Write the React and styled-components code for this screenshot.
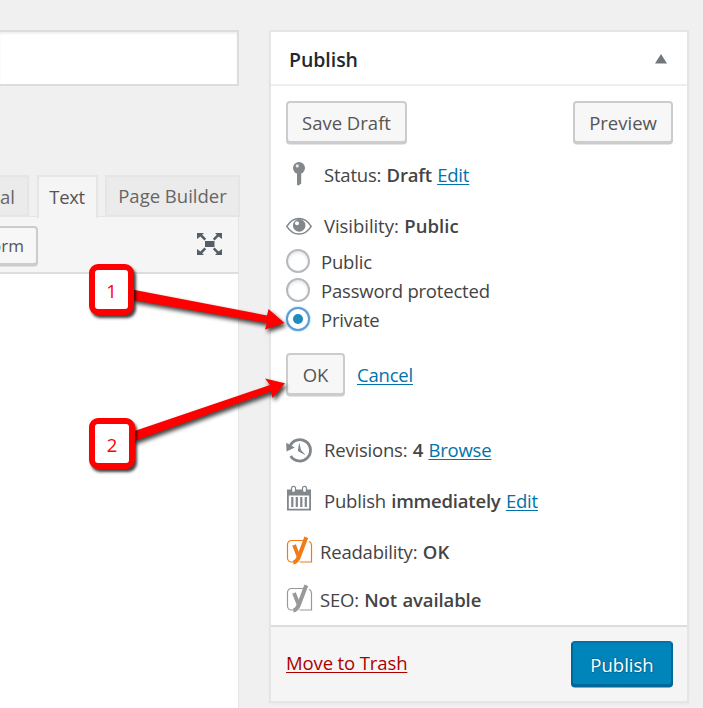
import styled, { createGlobalStyle, css } from 'styled-components';

const GlobalStyle = createGlobalStyle`
  * {
    box-sizing: border-box;
  }

  body {
    margin: 0;
    background: #f0f0f0;
    color: #444;
    font-family: 'Open Sans', 'Noto Sans', sans-serif;
    font-size: 18.5px;
    letter-spacing: -0.2px;
  }
`;

const Page = styled.div`
  position: relative;
  display: flex;
  justify-content: space-between;
  width: 703px;
  height: 708px;
  padding: 30px 14px 0 0;
  overflow: hidden;
`;

/* Editor column */

const Editor = styled.main`
  display: flex;
  flex-direction: column;
  width: 240px;
`;

const TitleField = styled.div`
  width: 239px;
  height: 56px;
  background: #fff;
  border: 2px solid #ddd;
  border-left: 0;
  box-shadow: inset 0 2px 2px rgba(0, 0, 0, 0.06);
`;

const Tabs = styled.div`
  display: flex;
  justify-content: space-between;
  height: 42px;
  margin-top: 89px;
`;

const Tab = styled.div`
  display: flex;
  align-items: center;
  justify-content: ${(props) => (props.$cut ? 'flex-end' : 'center')};
  width: ${(props) => props.$width}px;
  height: 42px;
  padding: ${(props) => (props.$cut ? '0 12px 0 0' : '0 0 1px')};
  border: 2px solid #e5e5e5;
  border-left-width: ${(props) => (props.$cut ? 0 : 2)}px;
  background: #ebebeb;
  color: #666;
  white-space: nowrap;
  letter-spacing: ${(props) => props.$spacing || 0}px;

  ${(props) =>
    props.$active &&
    css`
      z-index: 1;
      height: 43px;
      padding-bottom: 3px;
      border-bottom: 0;
      background: #f5f5f5;
      color: #555;
    `}
`;

const Toolbar = styled.div`
  display: flex;
  align-items: flex-start;
  justify-content: space-between;
  width: 239px;
  height: 58px;
  margin-top: -1px;
  padding: 9px 15px 0 0;
  background: #f5f5f5;
  border: 1px solid #e5e5e5;
  border-width: 1px 1px 2px 0;
  border-bottom-color: #ddd;
`;

const TextArea = styled.div`
  flex: 1;
  width: 239px;
  background: #fff;
  border-right: 1px solid #e5e5e5;
`;

/* Shared controls */

const Button = styled.button`
  display: flex;
  align-items: center;
  justify-content: center;
  width: ${(props) => props.$width}px;
  height: 42px;
  padding: 1px 0 0;
  border: 2px solid #ccc;
  border-radius: 4px;
  background: #f7f7f7;
  box-shadow: 0 1.5px 0 #ccc;
  color: #555;
  font: inherit;
  letter-spacing: ${(props) => props.$spacing || 0}px;
  white-space: nowrap;
`;

const ToolbarButton = styled(Button)`
  justify-content: flex-end;
  height: 39px;
  padding: 0 12px 0 0;
  border-left: 0;
  border-radius: 0 4px 4px 0;
  font-size: 17px;
`;

const PrimaryButton = styled(Button)`
  height: 45px;
  padding-top: 2px;
  border-color: #0073aa #006799 #006799;
  background: #0085ba;
  box-shadow: 0 1.5px 0 #006799;
  color: #fff;
  text-shadow: 0 -1px 1px #006799, 1px 0 1px #006799, 0 1px 1px #006799;
`;

const Link = styled.a`
  color: #0073aa;
  text-decoration: underline;
  text-decoration-thickness: 1px;
  text-underline-offset: 2px;
`;

const TrashLink = styled(Link)`
  padding-bottom: 2px;
  color: #a00;
  letter-spacing: -0.12px;
`;

/* Publish box */

const Box = styled.aside`
  display: flex;
  flex-direction: column;
  width: 420px;
  height: 673px;
  background: #fff;
  border: 2px solid #e5e5e5;
  box-shadow: 0 1px 2px rgba(0, 0, 0, 0.04);
`;

const BoxHeader = styled.header`
  display: flex;
  align-items: center;
  justify-content: space-between;
  height: 54px;
  padding: 2px 20px 0 18px;
  border-bottom: 2px solid #eee;
`;

const BoxTitle = styled.h2`
  margin: 0;
  color: #23282d;
  font-size: 19.5px;
  font-weight: 600;
  letter-spacing: -0.05px;
`;

const BoxBody = styled.div`
  flex: 1;
  padding: 15px 14px 0 15px;
`;

const Actions = styled.div`
  display: flex;
  justify-content: space-between;
  height: 49px;
`;

const Row = styled.div`
  display: flex;
  align-items: center;
  height: ${(props) => props.$height || 51}px;
  gap: ${(props) => props.$gap || 12}px;
  white-space: nowrap;
  word-spacing: 0.7px;
`;

const Label = styled.span`
  letter-spacing: ${(props) => props.$spacing}px;
`;

const Value = styled.b`
  font-weight: 600;
  letter-spacing: ${(props) => props.$spacing}px;
`;

const Options = styled.div`
  display: flex;
  flex-direction: column;
  margin: -6px 0 19px;
`;

const Option = styled.label`
  display: flex;
  align-items: center;
  gap: 11px;
  height: 29px;
`;

const Radio = styled.span`
  display: flex;
  align-items: center;
  justify-content: center;
  width: 24px;
  height: 24px;
  margin-top: -2px;
  border: 2px solid ${(props) => (props.$checked ? '#5b9dd9' : '#b4b9be')};
  border-radius: 50%;
  background: #fff;
  box-shadow: ${(props) =>
    props.$checked
      ? '0 0 2px rgba(30, 140, 190, 0.6)'
      : 'inset 0 2px 3px rgba(0, 0, 0, 0.1)'};

  &::after {
    content: '';
    width: 10px;
    height: 10px;
    border-radius: 50%;
    background: ${(props) => (props.$checked ? '#1e8cbe' : 'transparent')};
  }
`;

const Confirm = styled.div`
  display: flex;
  align-items: center;
  gap: 12px;
  height: 42px;
  margin-bottom: 29px;
`;

const BoxFooter = styled.footer`
  display: flex;
  align-items: center;
  justify-content: space-between;
  height: 76px;
  padding: 0 14px 2px 15px;
  background: #f5f5f5;
  border-top: 2px solid #ddd;
`;

/* Row icons share a 26px column */

const Icon = styled.svg`
  flex: none;
  width: 26px;
  height: 28px;
  margin-bottom: ${(props) => props.$lift || 0}px;
  overflow: visible;
`;

/* Numbered callouts drawn over the screen */

const Arrows = styled.svg`
  position: absolute;
  top: 0;
  left: 0;
  filter: drop-shadow(2px 3px 2px rgba(0, 0, 0, 0.75));
`;

const Callout = styled.div`
  position: absolute;
  top: ${(props) => props.$top}px;
  left: 89px;
  display: flex;
  align-items: center;
  justify-content: center;
  width: ${(props) => props.$width}px;
  height: 51px;
  padding-top: 2px;
  border: 6px solid #f00;
  border-radius: 9px;
  background: #fff;
  box-shadow: 2px 3px 3px rgba(0, 0, 0, 0.75);
  color: #f00;
`;

function PinIcon() {
  return (
    <Icon viewBox="0 0 26 28">
      <path d="M11 12h4.200v11.500L12.600 25.500 11 25z" fill="#82878c" />
      <circle cx="13" cy="8" r="6" fill="#82878c" />
      <circle cx="11.300" cy="5.900" r="1.600" fill="#e8e9ea" />
    </Icon>
  );
}

function EyeIcon() {
  return (
    <Icon viewBox="0 0 26 28">
      <path
        d="M.8 14.300C4 9.300 8.200 6.500 13 6.500s9 2.800 12.200 7.800C22 19.300 17.800 22 13 22S4 19.300 .8 14.300z"
        fill="#fff"
        stroke="#82878c"
        strokeWidth="1.500"
      />
      <circle cx="13.200" cy="13.400" r="6.300" fill="#82878c" />
      <circle cx="11" cy="11.300" r="2" fill="#fff" />
    </Icon>
  );
}

function HistoryIcon() {
  return (
    <Icon viewBox="0 0 26 28">
      <path
        d="M3.900 10.200A10.700 10.700 0 1 1 4.700 20"
        fill="none"
        stroke="#82878c"
        strokeWidth="2.800"
      />
      <path d="M.2 6.800L8.800 11.500.5 15.400z" fill="#82878c" />
      <path d="M13.300 6.600l1.700 7.400 4.700 5.200-7.200-3.800q-.9-.9-.5-2z" fill="#82878c" />
    </Icon>
  );
}

function CalendarIcon() {
  return (
    <Icon viewBox="0 0 26 28" $lift={3}>
      <path
        d="M1 4.500h24v21H1zM2.800 10.500v13.300h20.400V10.500z"
        fill="#82878c"
        fillRule="evenodd"
      />
      <path
        d="M6.300 12v10M10.800 12v10M15.300 12v10M19.800 12v10"
        stroke="#82878c"
        strokeWidth="2.200"
      />
      <rect x="5.500" y="1.300" width="4" height="6.200" rx="2" fill="#fff" stroke="#82878c" strokeWidth="1.200" />
      <rect x="16.500" y="1.300" width="4" height="6.200" rx="2" fill="#fff" stroke="#82878c" strokeWidth="1.200" />
    </Icon>
  );
}

function YoastIcon({ color }) {
  return (
    <Icon viewBox="0 0 26 28" fill="none" stroke={color} $lift={1}>
      <path
        d="M17 3.500H5.500a4 4 0 0 0-4 4v13.500a4 4 0 0 0 4 4H7M13.500 25h12V8q0-2.600-2.500-3.800"
        strokeWidth="1.200"
      />
      <path d="M8 8l4.600 11.500" strokeWidth="3.800" />
      <path d="M20.300 .3l-6.900 18.200c-1.400 4-2.900 6.500-6.100 7" strokeWidth="4" />
    </Icon>
  );
}

function FullscreenIcon() {
  return (
    <svg width="26" height="24" viewBox="0 0 26 24" fill="#555d66">
      <path d="M0 1h7L5.200 2.800l4 4-1.800 1.800-4-4L0 7zM25 1h-7l1.800 1.800-4 4 1.800 1.800 4-4L25 7zM0 23h7l-1.800-1.800 4-4-1.800-1.800-4 4L0 17zM25 23h-7l1.800-1.800-4-4 1.800-1.800 4 4L25 17z" />
      <path d="M8 9h9.500v6H8z" />
    </svg>
  );
}

function App() {
  return (
    <>
      <GlobalStyle />
      <Page>
        <Editor>
          <TitleField />
          <Tabs>
            <Tab $cut $width={29}>
              al
            </Tab>
            <Tab $active $width={61} $spacing={-0.4}>
              Text
            </Tab>
            <Tab $width={135}>Page Builder</Tab>
          </Tabs>
          <Toolbar>
            <ToolbarButton $width={38}>orm</ToolbarButton>
            <Row $height={36}>
              <FullscreenIcon />
            </Row>
          </Toolbar>
          <TextArea />
        </Editor>

        <Box>
          <BoxHeader>
            <BoxTitle>Publish</BoxTitle>
            <svg width="12" height="10" viewBox="0 0 12 10">
              <path d="M6 0l6 9.500H0z" fill="#72777c" />
            </svg>
          </BoxHeader>

          <BoxBody>
            <Actions>
              <Button $width={121}>Save Draft</Button>
              <Button $width={100}>Preview</Button>
            </Actions>

            <Row $height={48}>
              <PinIcon />
              <div>
                <Label>Status: </Label>
                <Value>Draft</Value> <Link>Edit</Link>
              </div>
            </Row>
            <Row $height={55}>
              <EyeIcon />
              <div>
                <Label $spacing={-0.05}>Visibility: </Label>
                <Value $spacing={0.1}>Public</Value>
              </div>
            </Row>

            <Options>
              <Option>
                <Radio />
                <Label>Public</Label>
              </Option>
              <Option>
                <Radio />
                <Label>Password protected</Label>
              </Option>
              <Option>
                <Radio $checked />
                <Label>Private</Label>
              </Option>
            </Options>

            <Confirm>
              <Button $width={59}>OK</Button>
              <Link>Cancel</Link>
            </Confirm>

            <Row>
              <HistoryIcon />
              <div>
                <Label>Revisions: </Label>
                <Value>4</Value> <Link>Browse</Link>
              </div>
            </Row>
            <Row>
              <CalendarIcon />
              <div>
                <Label>Publish </Label>
                <Value>immediately</Value> <Link>Edit</Link>
              </div>
            </Row>
            <Row $gap={8}>
              <YoastIcon color="#ee7c1b" />
              <div>
                <Label>Readability: </Label>
                <Value $spacing={0.2}>OK</Value>
              </div>
            </Row>
            <Row $height={45} $gap={8}>
              <YoastIcon color="#999" />
              <div>
                <Label>SEO: </Label>
                <Value $spacing={-0.1}>Not available</Value>
              </div>
            </Row>
          </BoxBody>

          <BoxFooter>
            <TrashLink>Move to Trash</TrashLink>
            <PrimaryButton $width={102}>Publish</PrimaryButton>
          </BoxFooter>
        </Box>

        <Arrows width="703" height="708" viewBox="0 0 703 708" fill="#f00">
          <path d="M132 289.500L267 315.500L268.500 309L284.500 323L265 329.500L267 323L132 300z" />
          <path d="M133 431.500L270 385L265 378.500L285 383.300L272.500 398L271 391.500L133 441.500z" />
        </Arrows>
        <Callout $top={264} $width={45}>
          1
        </Callout>
        <Callout $top={418} $width={46}>
          2
        </Callout>
      </Page>
    </>
  );
}

export default App;
